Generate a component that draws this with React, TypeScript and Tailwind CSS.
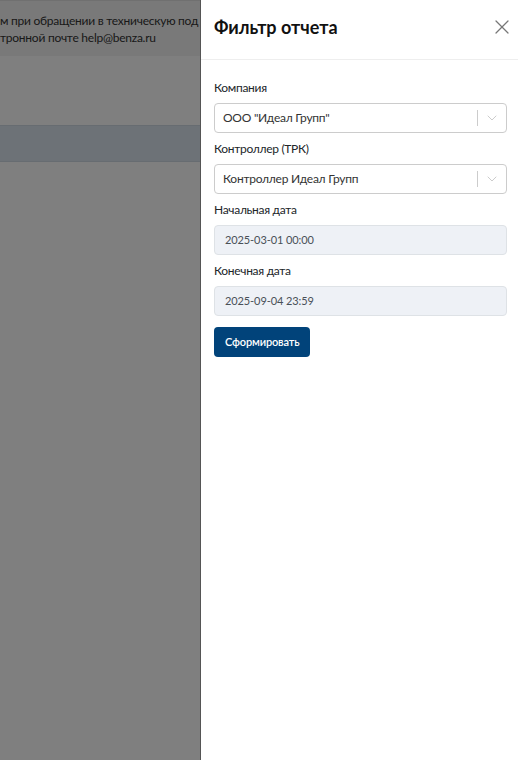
import React from 'react';
import { X, ChevronDown } from 'lucide-react';

const font = { fontFamily: 'Lato, "Open Sans", sans-serif' };

const Field = ({ label, children }: { label: string; children: React.ReactNode }) => (
  <div className="flex flex-col">
    <label className="h-5 leading-5 text-[12px] tracking-[-0.3px] text-[#212529] mb-[5px]">{label}</label>
    {children}
  </div>
);

const SelectBox = ({ value }: { value: string }) => (
  <div className="h-[30px] border border-[#cccccc] rounded-[4px] bg-white flex items-center">
    <span className="flex-1 pl-2 text-[12px] tracking-[-0.25px] text-[#333333] truncate">{value}</span>
    <span className="w-px h-[16px] bg-[#cccccc]" />
    <span className="w-[28px] flex items-center justify-center text-[#cccccc]">
      <ChevronDown className="w-4 h-4" strokeWidth={1.5} />
    </span>
  </div>
);

const DateInput = ({ value }: { value: string }) => (
  <div className="h-[30px] border border-[#dee2e6] rounded-[4px] bg-[#eef1f6] flex items-center px-[10px] text-[11px] tracking-[-0.1px] text-[#495057]">
    {value}
  </div>
);

export default function App() {
  return (
    <div className="relative w-[518px] h-[760px] overflow-hidden bg-white" style={font}>
      {/* page behind */}
      <div className="absolute inset-0 flex flex-col bg-white">
        <div className="h-px bg-[#e0e0e0]" />
        <div className="h-[55px] bg-[#f2f2f2] overflow-hidden pt-[11px] w-[201px]">
          <div className="w-[201px] overflow-hidden whitespace-nowrap text-[12px] tracking-[-0.25px] leading-[17px] text-[#333]">
            <p className="w-[201px] overflow-hidden">м при обращении в техническую под</p>
            <p className="w-[201px] overflow-hidden">тронной почте help@benza.ru</p>
          </div>
        </div>
        <div className="h-[69px] bg-white" />
        <div className="h-[37px] bg-[#dbe4ee] border-y border-[#cfd8e2]" />
        <div className="flex-1 bg-white" />
      </div>
      <div className="absolute inset-0 bg-black/50" />

      {/* drawer */}
      <div className="absolute top-0 right-0 bottom-0 w-[318px] bg-white border-l border-[#555] flex flex-col">
        <div className="h-[60px] border-b border-[#eeeeee] flex items-center justify-between pl-[13px] pr-[4px] pb-[5px]">
          <h2 className="text-[18px] font-bold text-[#111]">Фильтр отчета</h2>
          <X className="w-[24px] h-[24px] text-[#777]" strokeWidth={1.25} />
        </div>
        <div className="pt-[18px] px-[13px] pr-[11px] flex flex-col gap-[6px]">
          <Field label="Компания">
            <SelectBox value={'ООО "Идеал Групп"'} />
          </Field>
          <Field label="Контроллер (ТРК)">
            <SelectBox value="Контроллер Идеал Групп" />
          </Field>
          <Field label="Начальная дата">
            <DateInput value="2025-03-01 00:00" />
          </Field>
          <Field label="Конечная дата">
            <DateInput value="2025-09-04 23:59" />
          </Field>
          <div className="pt-[5px]">
            <button className="h-[30px] px-[11px] rounded-[4px] bg-[#01437a] text-white text-[11px] tracking-[-0.15px] font-semibold">
              Сформировать
            </button>
          </div>
        </div>
      </div>
    </div>
  );
}
